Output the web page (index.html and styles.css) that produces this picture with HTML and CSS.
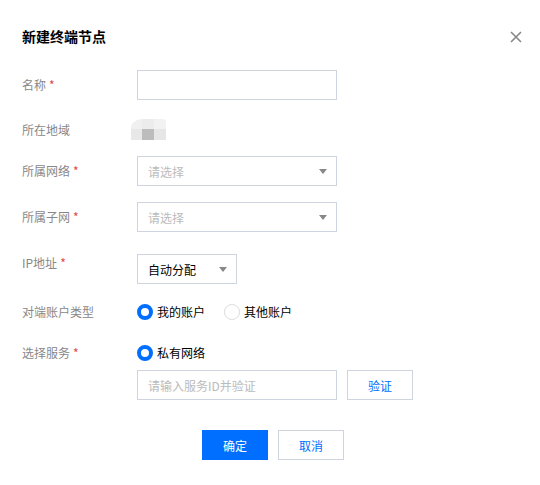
FILE: index.html
```html
<!DOCTYPE html>
<html lang="zh">
<head>
<meta charset="utf-8">
<link rel="stylesheet" href="styles.css">
</head>
<body>
<div class="dialog">
  <div class="header">
    <h3 class="title">新建终端节点</h3>
    <button class="close" aria-label="关闭">
      <svg width="12" height="12" viewBox="0 0 12 12"><path d="M1 1L11 11M11 1L1 11" stroke="#888" stroke-width="1.6" fill="none"/></svg>
    </button>
  </div>

  <div class="form">
    <div class="row r-name">
      <label class="label req">名称</label>
      <div class="control"><input class="input" type="text"></div>
    </div>

    <div class="row r-region">
      <label class="label">所在地域</label>
      <div class="control">
        <div class="flag">
          <span class="b b1"></span><span class="b b2"></span><span class="b b3"></span>
          <span class="b b4"></span><span class="b b5"></span><span class="b b6"></span>
        </div>
      </div>
    </div>

    <div class="row r-net">
      <label class="label req">所属网络</label>
      <div class="control"><div class="select"><span class="ph">请选择</span><i class="arrow"></i></div></div>
    </div>

    <div class="row r-subnet">
      <label class="label req">所属子网</label>
      <div class="control"><div class="select"><span class="ph">请选择</span><i class="arrow"></i></div></div>
    </div>

    <div class="row r-ip top">
      <label class="label req">IP地址</label>
      <div class="control"><div class="select small"><span class="val">自动分配</span><i class="arrow"></i></div></div>
    </div>

    <div class="row r-acct">
      <label class="label">对端账户类型</label>
      <div class="control radios">
        <span class="radio on"><i class="dot"></i>我的账户</span>
        <span class="radio"><i class="dot"></i>其他账户</span>
      </div>
    </div>

    <div class="row r-svc">
      <label class="label req">选择服务</label>
      <div class="control radios">
        <span class="radio on"><i class="dot"></i>私有网络</span>
      </div>
    </div>

    <div class="row r-verify">
      <span class="label"></span>
      <div class="control verify">
        <input class="input" type="text" placeholder="请输入服务ID并验证">
        <button class="btn">验证</button>
      </div>
    </div>
  </div>

  <div class="footer">
    <button class="btn primary">确定</button>
    <button class="btn">取消</button>
  </div>
</div>
</body>
</html>
```
FILE: styles.css
```css
* { box-sizing: border-box; }
html, body { margin: 0; padding: 0; background: #fff; }
body {
  font-family: "Noto Sans CJK SC", "Noto Sans", sans-serif;
  font-size: 12px;
  color: #000;
}
.dialog { width: 540px; padding: 0 18px 0 22px; }
.header {
  display: flex;
  justify-content: space-between;
  align-items: center;
  padding-top: 28px;
  height: 44px;
}
.title {
  margin: 0;
  font-size: 14px;
  font-weight: bold;
  line-height: 16px;
  color: #000;
}
.close {
  border: 0;
  background: none;
  padding: 0;
  width: 12px;
  height: 12px;
  margin-top: 2px;
  margin-right: 0;
  display: block;
}
.close svg { display: block; }

.form { display: flex; flex-direction: column; }
.row { display: flex; align-items: center; }
.row.top { align-items: flex-start; }
.label {
  width: 115px;
  flex: none;
  color: #888;
  line-height: 18px;
}
.label.req::after {
  content: "*";
  color: #e54545;
  margin-left: 3px;
}
.control { display: flex; align-items: center; }

.r-name { margin-top: 26px; height: 30px; }
.r-region { margin-top: 20px; height: 20px; }
.r-net { margin-top: 16px; height: 30px; }
.r-subnet { margin-top: 16px; height: 30px; }
.r-ip { margin-top: 22px; height: 30px; }
.r-acct { margin-top: 18px; height: 20px; }
.r-svc { margin-top: 21px; height: 20px; }
.r-verify { margin-top: 7px; height: 30px; }

.input {
  width: 200px;
  height: 30px;
  border: 1px solid #cfd5de;
  border-radius: 0;
  padding: 0 10px;
  font-family: inherit;
  font-size: 12px;
  outline: none;
  color: #000;
}
.input::placeholder { color: #bbb; }

.select {
  width: 200px;
  height: 30px;
  border: 1px solid #cfd5de;
  display: flex;
  align-items: center;
  justify-content: space-between;
  padding: 0 9px 0 10px;
}
.select.small { width: 100px; }
.ph { color: #bbb; }
.val { color: #000; }
.arrow {
  width: 0; height: 0;
  border-left: 4px solid transparent;
  border-right: 4px solid transparent;
  border-top: 5px solid #888;
}

.flag {
  display: grid;
  grid-template-columns: 11px 12px 12px;
  grid-template-rows: 10px 11px;
  margin-left: -6px;
  margin-top: -2px;
}
.b { display: block; }
.b1 { background: #f0f0f0; border-top-left-radius: 11px 9px; }
.b2 { background: #ececec; }
.b3 { background: #f2f2f2; border-top-right-radius: 3px; }
.b4 { background: #e8e8e8; }
.b5 { background: #bcbcbc; }
.b6 { background: #e6e6e6; }

.radios { gap: 19px; }
.radio {
  display: inline-flex;
  align-items: center;
  color: #000;
  line-height: 18px;
}
.dot {
  width: 16px;
  height: 16px;
  border-radius: 50%;
  border: 1px solid #ddd;
  background: #fff;
  margin-right: 4px;
  flex: none;
}
.radio.on .dot { border: 4.5px solid #006eff; }

.verify { gap: 10px; }
.btn {
  width: 66px;
  height: 30px;
  border: 1px solid #cfd5de;
  background: #fff;
  color: #006eff;
  font-family: inherit;
  font-size: 12px;
  padding: 0;
  border-radius: 0;
}
.btn.primary {
  background: #006eff;
  border-color: #006eff;
  color: #fff;
}
.footer {
  display: flex;
  justify-content: center;
  gap: 10px;
  margin-top: 30px;
  padding-left: 2px;
}
```
